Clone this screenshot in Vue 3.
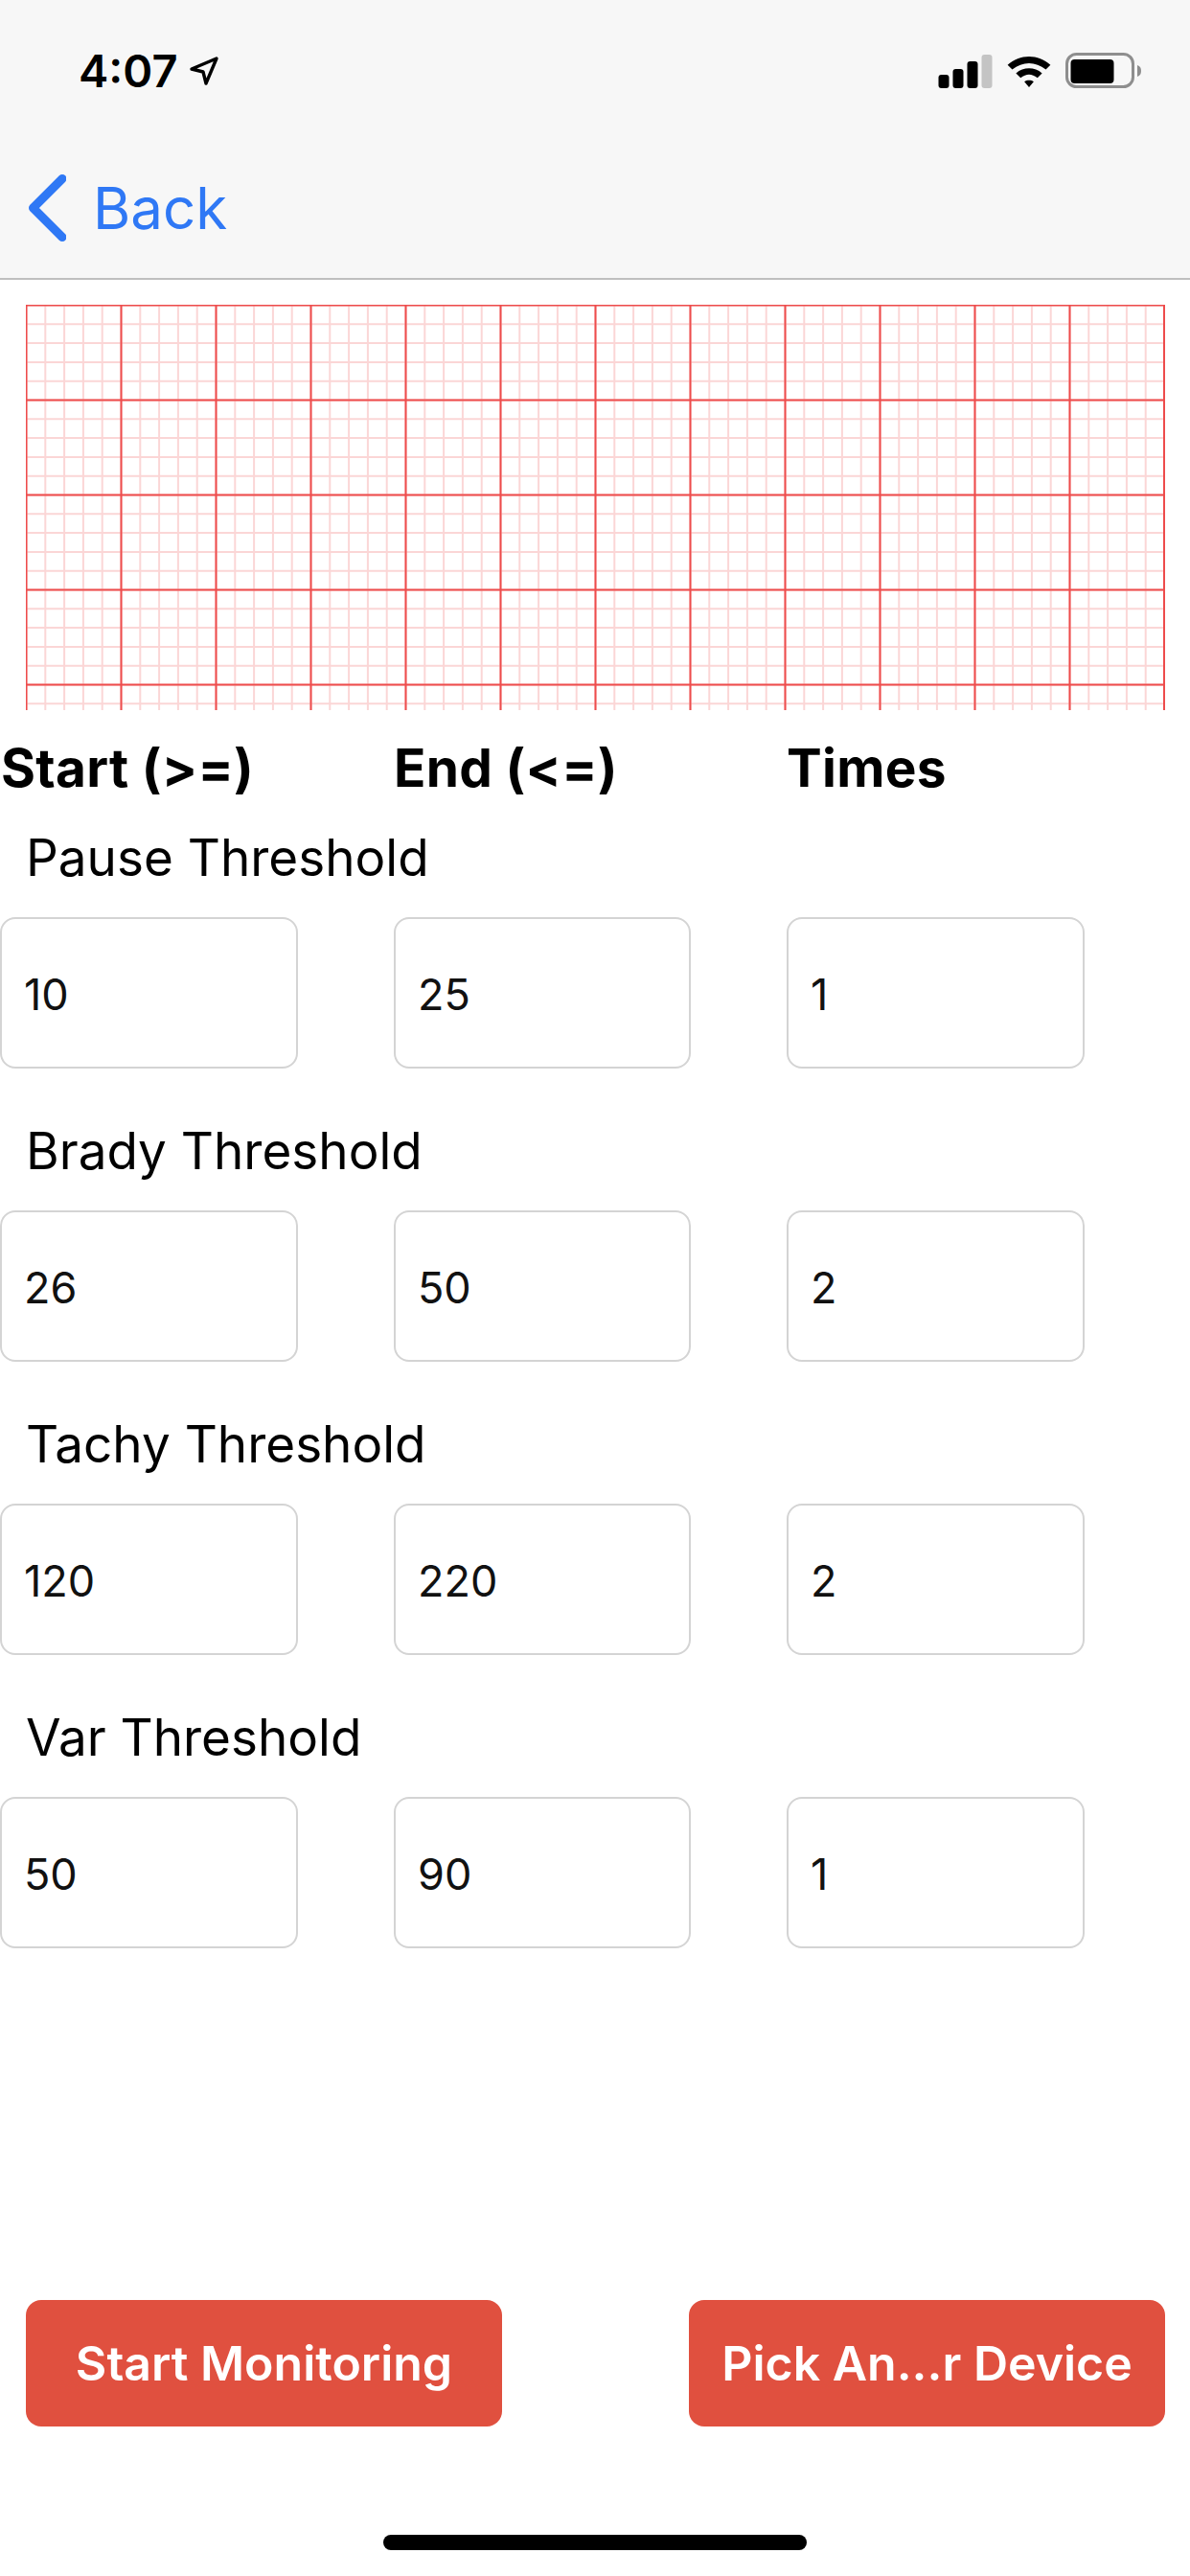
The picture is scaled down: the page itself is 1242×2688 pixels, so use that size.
<script setup>
const rows = [
  { label: 'Pause Threshold', values: ['10', '25', '1'] },
  { label: 'Brady Threshold', values: ['26', '50', '2'] },
  { label: 'Tachy Threshold', values: ['120', '220', '2'] },
  { label: 'Var Threshold', values: ['50', '90', '1'] },
]
const heads = ['Start (>=)', 'End (<=)', 'Times']
const xs = Array.from({ length: 60 }, (_, i) => 0.5 + i * 19.8)
const ys = Array.from({ length: 22 }, (_, i) => 0.5 + i * 19.8)
</script>

<template>
  <div class="page">
    <header class="nav">
      <div class="status">
        <div class="time-wrap">
          <span class="time">4:07</span>
          <svg class="loc" width="32" height="32" viewBox="0 0 32 32">
            <path d="M29 3 L3 14 L15 17 L18 29 Z" fill="none" stroke="#000" stroke-width="3.4" stroke-linejoin="round" />
          </svg>
        </div>
        <div class="indicators">
          <svg class="ind" width="57" height="35" viewBox="0 0 57 35">
            <rect x="0.5" y="21" width="11" height="14" rx="3" fill="#000" />
            <rect x="15.5" y="15" width="11" height="20" rx="3" fill="#000" />
            <rect x="30.5" y="7" width="11" height="28" rx="3" fill="#000" />
            <rect x="45.5" y="0" width="11" height="35" rx="3" fill="#c4c4c4" />
          </svg>
          <svg class="ind" width="48" height="35" viewBox="0 0 48 36">
            <path d="M1 11 C14 -1 34 -1 47 11 L42 16 C31 7 17 7 6 16 Z" fill="#000" />
            <path d="M10 20 C18 13 30 13 38 20 L33 25 C27 20 21 20 15 25 Z" fill="#000" />
            <path d="M19 29 C22 27 26 27 29 29 L24 35 Z" fill="#000" />
          </svg>
          <svg class="bat" width="80" height="38" viewBox="0 0 80 38">
            <rect x="1.5" y="1.5" width="69" height="34" rx="10" fill="none" stroke="#8e8e8e" stroke-width="3" />
            <rect x="5.5" y="7" width="45" height="25" rx="4" fill="#000" />
            <path d="M75 13 C78 14 79 16 79 19 C79 22 78 24 75 25 Z" fill="#8e8e8e" />
          </svg>
        </div>
      </div>
      <div class="back">
        <svg width="42" height="72" viewBox="0 0 42 72">
          <path d="M38 5.5 L7.5 36 L38 66.5" fill="none" stroke="#2f78f5" stroke-width="9" stroke-linecap="round" stroke-linejoin="round" />
        </svg>
        <span>Back</span>
      </div>
    </header>

    <main class="content">
      <svg class="grid" width="1189" height="423" viewBox="0 0 1189 423">
        <g stroke="#fbd6d6" stroke-width="2">
          <line v-for="x in xs" :key="'vm' + x" :x1="x" :x2="x" y1="0" y2="423" />
          <line v-for="y in ys" :key="'hm' + y" :y1="y" :y2="y" x1="0" x2="1189" />
        </g>
        <g stroke="#ee4c4c" stroke-width="2">
          <line v-for="i in 13" :key="'v' + i" :x1="(i - 1) * 99 + 0.5" :x2="(i - 1) * 99 + 0.5" y1="0" y2="423" />
          <line v-for="i in 5" :key="'h' + i" :y1="(i - 1) * 99 + 0.5" :y2="(i - 1) * 99 + 0.5" x1="0" x2="1189" />
          <line x1="1188" x2="1188" y1="0" y2="423" />
        </g>
      </svg>

      <div class="heads">
        <div v-for="h in heads" :key="h" class="head">{{ h }}</div>
      </div>

      <section v-for="row in rows" :key="row.label" class="row">
        <div class="label">{{ row.label }}</div>
        <div class="fields">
          <div v-for="(v, i) in row.values" :key="i" class="field">{{ v }}</div>
        </div>
      </section>

      <div class="spacer"></div>

      <div class="actions">
        <button class="btn">Start Monitoring</button>
        <button class="btn">Pick An...r Device</button>
      </div>

      <div class="home-wrap"><div class="home"></div></div>
    </main>
  </div>
</template>

<style>
html, body { margin: 0; background: #fff; }
</style>

<style scoped>
.page {
  width: 1242px;
  height: 2688px;
  display: flex;
  flex-direction: column;
  background: #fff;
  color: #000;
  font-family: Inter, "Liberation Sans", sans-serif;
  overflow: hidden;
}
.nav {
  height: 292px;
  box-sizing: border-box;
  background: #f7f7f7;
  border-bottom: 2px solid #bfbfbf;
  padding: 0 50px 0 27px;
  flex: none;
}
.status {
  height: 132px;
  display: flex;
  justify-content: space-between;
  align-items: flex-start;
  padding-top: 54px;
  box-sizing: border-box;
}
.time-wrap {
  display: flex;
  align-items: center;
  gap: 12px;
  margin-left: 55px;
  height: 40px;
}
.time {
  font-size: 47px;
  font-weight: 600;
  line-height: 40px;
}
.indicators {
  display: flex;
  align-items: flex-start;
  gap: 14px;
}
.ind { margin-top: 3px; }
.bat { margin-top: 1px; }
.back {
  display: flex;
  align-items: center;
  gap: 28px;
  color: #2f78f5;
  font-size: 60px;
  line-height: 72px;
  margin-top: 49px;
}
.content {
  flex: 1;
  display: flex;
  flex-direction: column;
  min-height: 0;
}
.grid {
  display: block;
  margin: 26px 0 0 27px;
  flex: none;
}
.heads {
  display: flex;
  height: 56px;
  margin-top: 32px;
  padding-left: 1px;
}
.head {
  width: 410px;
  font-size: 55px;
  font-weight: 700;
  line-height: 56px;
  letter-spacing: 0.3px;
}
.row { height: 306px; }
.label {
  font-size: 53px;
  line-height: 60px;
  padding: 36px 0 0 27px;
  height: 128px;
  box-sizing: border-box;
}
.fields {
  display: grid;
  grid-template-columns: 311px 310px 311px;
  column-gap: 100px;
}
.field {
  height: 158px;
  box-sizing: border-box;
  border: 2px solid #d4d4d4;
  border-radius: 16px;
  display: flex;
  align-items: center;
  padding: 2px 0 0 23px;
  font-size: 45px;
  color: #111;
}
.spacer { flex: 1; }
.actions {
  display: flex;
  justify-content: space-between;
  padding: 0 26px 0 27px;
}
.btn {
  width: 497px;
  height: 132px;
  border: none;
  border-radius: 16px;
  background: #e0503f;
  color: #fff;
  font-family: inherit;
  font-size: 50px;
  font-weight: 600;
  padding: 0;
}
.home-wrap {
  height: 156px;
  display: flex;
  justify-content: center;
  padding-top: 113px;
  box-sizing: border-box;
}
.home {
  width: 442px;
  height: 16px;
  border-radius: 8px;
  background: #000;
}
</style>
